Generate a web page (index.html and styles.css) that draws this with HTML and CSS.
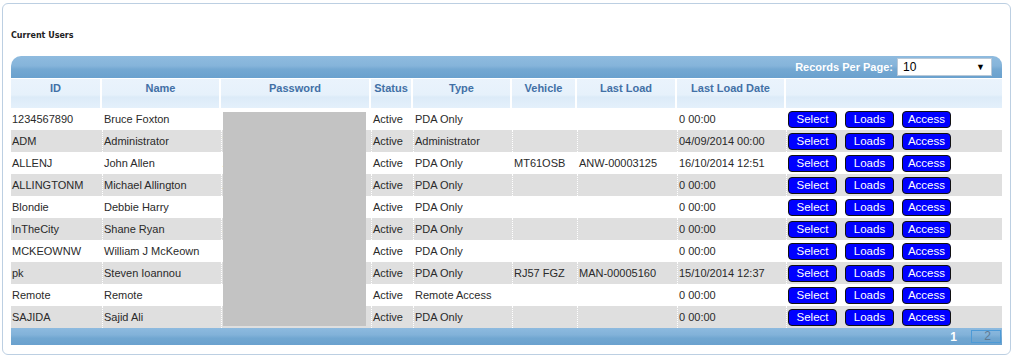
FILE: index.html
```html
<!DOCTYPE html>
<html>
  <head>
    <meta http-equiv="Content-Type" content="text/html; charset=UTF-8">
    <title>Current Users</title>
    <link rel="stylesheet" href="styles.css">
  </head>
  <body>

    <div id="panel">
      <div class="titulo">Current Users</div>

      <div class="barra">
        <span class="rpp">Records Per Page:</span>
        <div class="selector"><span>10</span><span class="flecha">&#9660;</span></div>
      </div>

      <table id="usuarios">
        <colgroup>
          <col style="width:91px">
          <col style="width:119px">
          <col style="width:150px">
          <col style="width:42px">
          <col style="width:99px">
          <col style="width:65px">
          <col style="width:100px">
          <col style="width:109px">
          <col style="width:216px">
        </colgroup>
        <thead>
          <tr>
            <th>ID</th>
            <th>Name</th>
            <th>Password</th>
            <th>Status</th>
            <th>Type</th>
            <th>Vehicle</th>
            <th>Last Load</th>
            <th>Last Load Date</th>
            <th></th>
          </tr>
        </thead>
        <tbody>
          <tr>
            <td>1234567890</td><td>Bruce Foxton</td><td class="pw"></td><td>Active</td><td>PDA Only</td><td></td><td></td><td>0 00:00</td>
            <td class="acciones"><button>Select</button><button>Loads</button><button>Access</button></td>
          </tr>
          <tr class="par">
            <td>ADM</td><td>Administrator</td><td class="pw c1">T</td><td>Active</td><td>Administrator</td><td></td><td></td><td>04/09/2014 00:00</td>
            <td class="acciones"><button>Select</button><button>Loads</button><button>Access</button></td>
          </tr>
          <tr>
            <td>ALLENJ</td><td>John Allen</td><td class="pw c2">A</td><td>Active</td><td>PDA Only</td><td>MT61OSB</td><td>ANW-00003125</td><td>16/10/2014 12:51</td>
            <td class="acciones"><button>Select</button><button>Loads</button><button>Access</button></td>
          </tr>
          <tr class="par">
            <td>ALLINGTONM</td><td>Michael Allington</td><td class="pw c2">A</td><td>Active</td><td>PDA Only</td><td></td><td></td><td>0 00:00</td>
            <td class="acciones"><button>Select</button><button>Loads</button><button>Access</button></td>
          </tr>
          <tr>
            <td>Blondie</td><td>Debbie Harry</td><td class="pw c3">I</td><td>Active</td><td>PDA Only</td><td></td><td></td><td>0 00:00</td>
            <td class="acciones"><button>Select</button><button>Loads</button><button>Access</button></td>
          </tr>
          <tr class="par">
            <td>InTheCity</td><td>Shane Ryan</td><td class="pw c3">J</td><td>Active</td><td>PDA Only</td><td></td><td></td><td>0 00:00</td>
            <td class="acciones"><button>Select</button><button>Loads</button><button>Access</button></td>
          </tr>
          <tr>
            <td>MCKEOWNW</td><td>William J McKeown</td><td class="pw c3">I</td><td>Active</td><td>PDA Only</td><td></td><td></td><td>0 00:00</td>
            <td class="acciones"><button>Select</button><button>Loads</button><button>Access</button></td>
          </tr>
          <tr class="par">
            <td>pk</td><td>Steven Ioannou</td><td class="pw c2">I</td><td>Active</td><td>PDA Only</td><td>RJ57 FGZ</td><td>MAN-00005160</td><td>15/10/2014 12:37</td>
            <td class="acciones"><button>Select</button><button>Loads</button><button>Access</button></td>
          </tr>
          <tr>
            <td>Remote</td><td>Remote</td><td class="pw c3">-</td><td>Active</td><td>Remote Access</td><td></td><td></td><td>0 00:00</td>
            <td class="acciones"><button>Select</button><button>Loads</button><button>Access</button></td>
          </tr>
          <tr class="par">
            <td>SAJIDA</td><td>Sajid Ali</td><td class="pw c3">-</td><td>Active</td><td>PDA Only</td><td></td><td></td><td>0 00:00</td>
            <td class="acciones"><button>Select</button><button>Loads</button><button>Access</button></td>
          </tr>
        </tbody>
      </table>

      <div class="pie">
        <span class="pag-actual">1</span>
        <span class="pag">2</span>
      </div>

      <!-- tapa las contraseñas -->
      <div class="censura"></div>
    </div>

  </body>
</html>
```

FILE: styles.css
```css
body {
  margin: 0;
  padding: 3px 0 0 2px;
  font-family: "Liberation Sans", Arial, sans-serif;
  font-size: 11px;
  color: #2a2a2a;
}

#panel {
  position: relative;
  width: 999px;
  height: 341px;
  padding: 0 0 9px 8px;
  border: 1px solid #bccfe2;
  border-radius: 6px;
}

.titulo {
  padding-top: 26px;
  height: 12px;
  line-height: 12px;
  margin-bottom: 14px;
  font-family: "DejaVu Sans", Verdana, sans-serif;
  font-size: 8px;
  font-weight: bold;
  color: #222;
}

.barra {
  width: 991px;
  height: 22px;
  margin-bottom: 1px;
  border-radius: 10px 9px 0 0;
  background: linear-gradient(to bottom, #8fbbdf 0%, #85b4da 45%, #74a8d2 60%, #6aa1ce 100%);
  display: flex;
  align-items: center;
  justify-content: flex-end;
  box-sizing: border-box;
  padding-right: 10px;
}

.rpp {
  color: #fff;
  font-weight: bold;
  margin-right: 4px;
}

.selector {
  width: 95px;
  height: 18px;
  box-sizing: border-box;
  background: #fff;
  border: 1px solid #b9c9d8;
  display: flex;
  align-items: center;
  justify-content: space-between;
  padding: 0 6px 0 5px;
  font-size: 12px;
  color: #000;
}

.flecha {
  font-size: 9px;
}

#usuarios {
  width: 991px;
  table-layout: fixed;
  border-collapse: separate;
  border-spacing: 0;
}

#usuarios th {
  height: 29px;
  padding: 3px 0 0 0;
  vertical-align: top;
  text-align: center;
  font-weight: bold;
  color: #4270a6;
  background: linear-gradient(to bottom, #eaf3fc 0%, #e6f1fb 55%, #dcebf8 62%, #e4f0fb 100%);
  border-right: 2px solid #fff;
  box-sizing: border-box;
}

#usuarios th:last-child {
  border-right: none;
}

#usuarios td {
  height: 22px;
  padding: 0 0 0 1px;
  border-left: 1px dotted #fff;
  white-space: nowrap;
  overflow: hidden;
  box-sizing: border-box;
}

#usuarios td:first-child {
  border-left: none;
}

#usuarios tr.par td {
  background: #dfdfdf;
}

.pw {
  color: #e0a53a;
}

.c1 { color: #555; }
.c2 { color: #d0703a; }
.c3 { color: #f2d07a; }

#usuarios td.acciones {
  padding: 0 0 0 1px;
}

td.acciones button {
  width: 49px;
  height: 17px;
  margin: 0 8px 0 0;
  padding: 0;
  border: 1px solid #111;
  border-radius: 4px;
  background: #0000ff;
  color: #fff;
  font-family: "Liberation Sans", Arial, sans-serif;
  font-size: 11.5px;
  line-height: 14px;
  vertical-align: middle;
}

.pie {
  width: 991px;
  height: 17px;
  background: linear-gradient(to bottom, #8dbadf 0%, #82b2d9 40%, #71a7d1 60%, #6aa1ce 100%);
  display: flex;
  align-items: center;
  justify-content: flex-end;
  box-sizing: border-box;
  padding-right: 1px;
}

.pag-actual {
  color: #fff;
  font-weight: bold;
  font-size: 12px;
  margin-right: 14px;
}

.pag {
  width: 30px;
  height: 13px;
  box-sizing: border-box;
  border: 1px solid #4d9ad6;
  color: #5f7a93;
  font-size: 12px;
  line-height: 11px;
  text-align: right;
  padding-right: 9px;
}

.censura {
  position: absolute;
  left: 220px;
  top: 108px;
  width: 143px;
  height: 214px;
  background: #c3c3c3;
}
```
